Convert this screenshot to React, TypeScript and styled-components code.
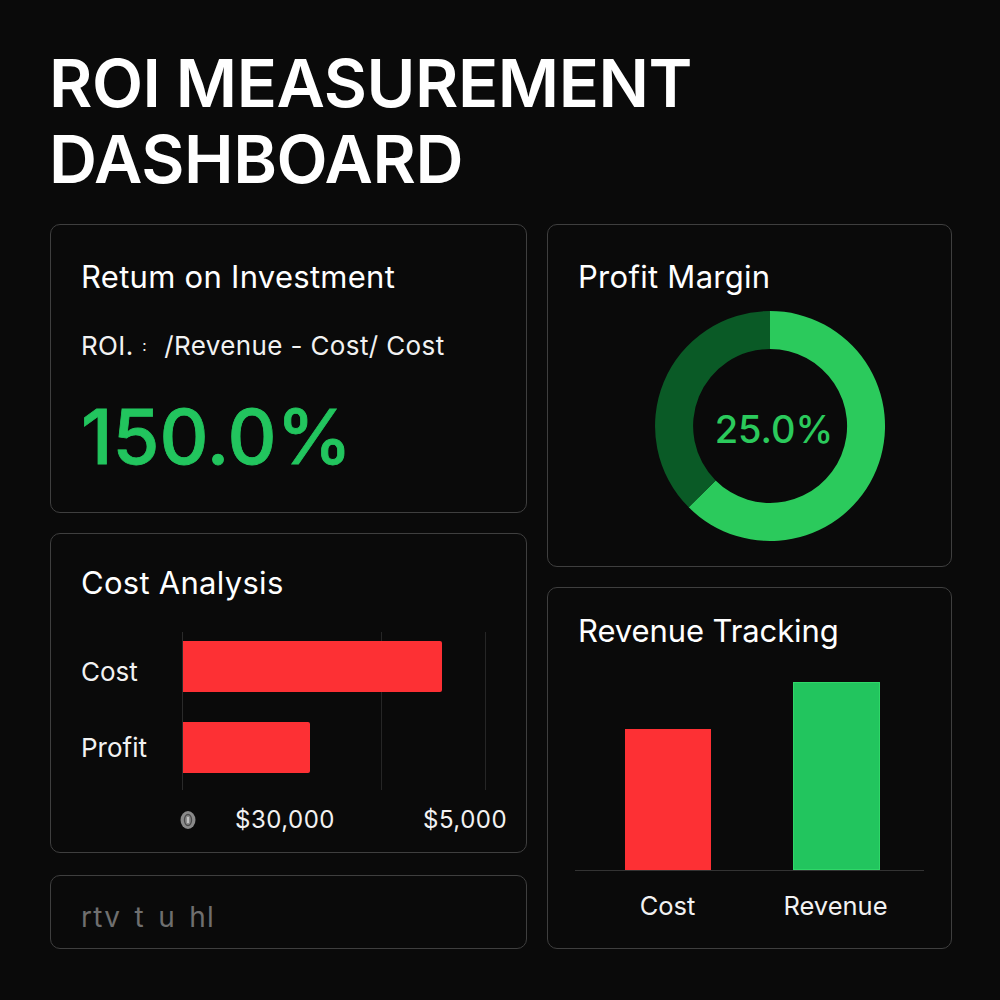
import { createGlobalStyle, styled } from 'styled-components';

const GlobalStyle = createGlobalStyle`
  html, body {
    margin: 0;
    padding: 0;
    background: #0a0a0a;
  }
  body {
    font-family: Inter, "Liberation Sans", sans-serif;
    color: #fff;
  }
`;

const Page = styled.div`
  width: 1000px;
  height: 1000px;
  box-sizing: border-box;
  padding: 45px 48px 0 50px;
  overflow: hidden;
`;

const Title = styled.h1`
  margin: 0 0 27px -1px;
  font-size: 66.5px;
  line-height: 76px;
  font-weight: 600;
  letter-spacing: -0.45px;
  word-spacing: -1px;
  color: #fff;
`;

const Columns = styled.div`
  display: grid;
  grid-template-columns: 477px 405px;
  column-gap: 20px;
`;

const Column = styled.div`
  display: flex;
  flex-direction: column;
`;

const Card = styled.section<{ $height: number; $gap: number; $top: number }>`
  box-sizing: border-box;
  height: ${(p) => p.$height}px;
  margin-bottom: ${(p) => p.$gap}px;
  padding: ${(p) => p.$top}px 30px 0;
  background: #0a0a0a;
  border: 1px solid #3f3f3f;
  border-radius: 10px;
`;

const CardTitle = styled.h2<{ $spacing?: number }>`
  margin: 0;
  font-size: 31px;
  line-height: 36px;
  font-weight: 400;
  letter-spacing: ${(p) => p.$spacing ?? 0.28}px;
  color: #fff;
`;

const Formula = styled.div`
  margin-top: 35px;
  font-size: 26px;
  line-height: 32px;
  letter-spacing: 0.37px;
  white-space: pre;
  color: #f2f2f2;
`;

const FormulaColon = styled.span`
  margin: 0 2px 0 1px;
  font-size: 15px;
  vertical-align: 3px;
`;

const BigValue = styled.div`
  margin-top: 27px;
  font-size: 76px;
  line-height: 92px;
  font-weight: 500;
  letter-spacing: 0;
  -webkit-text-stroke: 0.8px #22c55e;
  color: #22c55e;
`;

const DonutWrap = styled.div`
  position: relative;
  width: 232px;
  height: 232px;
  margin: 15px 0 0 76px;
`;

const DonutLabel = styled.div`
  position: absolute;
  inset: 0;
  display: flex;
  align-items: center;
  justify-content: center;
  padding: 6px 0 0 8px;
  font-size: 38px;
  font-weight: 500;
  color: #2bca5c;
`;

const CostChart = styled.div`
  display: grid;
  grid-template-columns: 101px 305px;
  margin-top: 31px;
`;

const RowLabels = styled.div`
  display: flex;
  flex-direction: column;
  padding-top: 17px;
  gap: 31px;
`;

const RowLabel = styled.div`
  display: flex;
  align-items: center;
  height: 45px;
  font-size: 26px;
  color: #f2f2f2;
`;

const Plot = styled.div`
  display: flex;
  flex-direction: column;
  gap: 30px;
  height: 158px;
  box-sizing: border-box;
  padding-top: 9px;
  background:
    linear-gradient(#2a2a2a, #2a2a2a) 0 0 / 1px 100% no-repeat,
    linear-gradient(#262626, #262626) 199px 0 / 1px 100% no-repeat,
    linear-gradient(#262626, #262626) 303px 0 / 1px 100% no-repeat;
`;

const HBar = styled.div<{ $width: number }>`
  width: ${(p) => p.$width}px;
  height: 51px;
  margin-left: 1px;
  background: #fd3034;
  border-radius: 0 2px 2px 0;
`;

const Ticks = styled.div`
  display: grid;
  grid-template-columns: 55px 188px auto;
  align-items: center;
  margin: 15px 0 0 99px;
  font-size: 24px;
  letter-spacing: 0.5px;
  line-height: 30px;
  color: #f2f2f2;
`;

const Garbled = styled.div`
  margin-top: -8px;
  font-size: 28px;
  line-height: 30px;
  white-space: pre;
  letter-spacing: 1.3px;
  word-spacing: 4px;
  color: #6f6f6f;
`;

const BarPlot = styled.div`
  display: flex;
  justify-content: center;
  align-items: flex-end;
  gap: 82px;
  height: 221px;
  margin: 0 -3px;
  padding-left: 5px;
  border-bottom: 1px solid #333;
`;

const VBar = styled.div<{ $width: number; $height: number; $color: string; $edge: string }>`
  width: ${(p) => p.$width}px;
  height: ${(p) => p.$height}px;
  background: ${(p) => p.$color};
  box-shadow: inset 0 0 0 1px ${(p) => p.$edge};
`;

const BarLabels = styled.div`
  display: flex;
  justify-content: center;
  gap: 82px;
  margin: 20px -3px 0;
  padding-left: 4px;
  font-size: 25.5px;
  line-height: 30px;
  color: #f2f2f2;
`;

const BarLabel = styled.div`
  display: flex;
  justify-content: center;
  width: 86px;
  white-space: nowrap;
`;

const ZeroMark = () => (
  <svg width="16" height="20" viewBox="0 0 16 20">
    <ellipse cx="8" cy="10" rx="7.5" ry="9" fill="#8a8a8a" />
    <ellipse cx="8" cy="10" rx="3.5" ry="5.5" fill="none" stroke="#4a4a4a" strokeWidth="1.4" />
    <rect x="7.2" y="7" width="1.6" height="6" fill="#d0d0d0" />
  </svg>
);

const Donut = () => (
  <svg width="232" height="232" viewBox="0 0 232 232">
    <path
      d="M116 1 A115 115 0 1 1 34.7 197.3 L61.6 170.4 A77 77 0 1 0 116 39 Z"
      fill="#2bca5c"
    />
    <path
      d="M116 1 A115 115 0 0 0 34.7 197.3 L61.6 170.4 A77 77 0 0 1 116 39 Z"
      fill="#0a5a26"
    />
  </svg>
);

const App = () => (
  <>
    <GlobalStyle />
    <Page>
      <Title>
        ROI MEASUREMENT
        <br />
        DASHBOARD
      </Title>
      <Columns>
        <Column>
          <Card $height={289} $gap={20} $top={34}>
            <CardTitle>Retum on Investment</CardTitle>
            <Formula>
              ROI. <FormulaColon>{'\u2236'}</FormulaColon>
              {'  /Revenue - Cost/ Cost'}
            </Formula>
            <BigValue>150.0%</BigValue>
          </Card>
          <Card $height={320} $gap={22} $top={31}>
            <CardTitle>Cost Analysis</CardTitle>
            <CostChart>
              <RowLabels>
                <RowLabel>Cost</RowLabel>
                <RowLabel>Profit</RowLabel>
              </RowLabels>
              <Plot>
                <HBar $width={259} />
                <HBar $width={127} />
              </Plot>
            </CostChart>
            <Ticks>
              <ZeroMark />
              <span>$30,000</span>
              <span>$5,000</span>
            </Ticks>
          </Card>
          <Card $height={74} $gap={0} $top={34}>
            <Garbled>{'rtv t u hl'}</Garbled>
          </Card>
        </Column>
        <Column>
          <Card $height={343} $gap={20} $top={34}>
            <CardTitle>Profit Margin</CardTitle>
            <DonutWrap>
              <Donut />
              <DonutLabel>25.0%</DonutLabel>
            </DonutWrap>
          </Card>
          <Card $height={362} $gap={0} $top={25}>
            <CardTitle $spacing={-0.1}>Revenue Tracking</CardTitle>
            <BarPlot>
              <VBar $width={86} $height={141} $color="#fd3034" $edge="#fd3034" />
              <VBar $width={87} $height={188} $color="#22c55e" $edge="#2fd868" />
            </BarPlot>
            <BarLabels>
              <BarLabel>Cost</BarLabel>
              <BarLabel>Revenue</BarLabel>
            </BarLabels>
          </Card>
        </Column>
      </Columns>
    </Page>
  </>
);

export default App;
